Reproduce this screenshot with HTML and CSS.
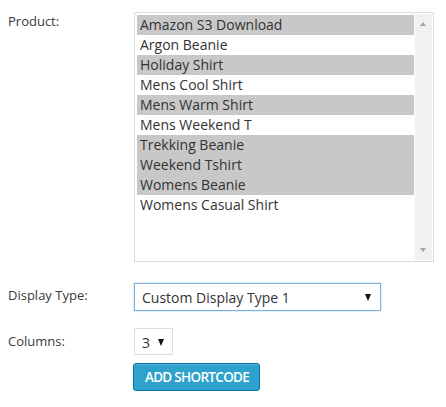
FILE: index.html
```html
<!DOCTYPE html>
<html>
<head>
<meta charset="utf-8">
<link rel="stylesheet" href="styles.css">
</head>
<body>
<div class="form">
  <div class="row row-product">
    <div class="label">Product:</div>
    <div class="listbox">
      <div class="items">
        <div class="item sel">Amazon S3 Download</div>
        <div class="item">Argon Beanie</div>
        <div class="item sel">Holiday Shirt</div>
        <div class="item">Mens Cool Shirt</div>
        <div class="item sel">Mens Warm Shirt</div>
        <div class="item">Mens Weekend T</div>
        <div class="item sel">Trekking Beanie</div>
        <div class="item sel">Weekend Tshirt</div>
        <div class="item sel">Womens Beanie</div>
        <div class="item">Womens Casual Shirt</div>
      </div>
      <div class="scrollbar">
        <span class="arrow up"></span>
        <span class="arrow down"></span>
      </div>
    </div>
  </div>
  <div class="row row-type">
    <div class="label">Display Type:</div>
    <div class="select select-type">
      <span>Custom Display Type 1</span>
      <span class="caret"></span>
    </div>
  </div>
  <div class="row row-cols">
    <div class="label">Columns:</div>
    <div class="control">
      <div class="select select-cols">
        <span>3</span>
        <span class="caret"></span>
      </div>
      <button class="btn">ADD SHORTCODE</button>
    </div>
  </div>
</div>
</body>
</html>
```

FILE: styles.css
```css
html, body {
  margin: 0;
  padding: 0;
  background: #ffffff;
}
body {
  font-family: "Open Sans", "Liberation Sans", sans-serif;
  color: #333333;
}
.form {
  padding: 12px 0 0 8px;
  display: flex;
  flex-direction: column;
}
.row {
  display: grid;
  grid-template-columns: 126px auto;
  align-items: start;
}
.label {
  font-size: 13px;
  line-height: 18px;
  color: #3a3a3a;
}
.listbox {
  width: 298px;
  height: 248px;
  border: 1px solid #dddddd;
  display: flex;
  justify-content: space-between;
  background: #fff;
}
.items {
  padding: 2px 0 0 2px;
  width: 277px;
}
.item {
  height: 20px;
  line-height: 20px;
  font-size: 14px;
  padding-left: 3px;
  color: #333;
  white-space: nowrap;
}
.item.sel {
  background: #c8c8c8;
}
.scrollbar {
  width: 17px;
  margin: 1px 1px 1px 0;
  background: #f1f1f1;
  position: relative;
}
.arrow {
  position: absolute;
  left: 5px;
  width: 0;
  height: 0;
  border-left: 3.5px solid transparent;
  border-right: 3.5px solid transparent;
}
.arrow.up {
  top: 8px;
  border-bottom: 4px solid #a3a3a3;
}
.arrow.down {
  bottom: 8px;
  border-top: 4px solid #a3a3a3;
}
.row-type {
  margin-top: 21px;
  align-items: center;
}
.row-type .label {
  padding-bottom: 4px;
}
.select {
  box-sizing: border-box;
  display: flex;
  align-items: center;
  justify-content: space-between;
  font-size: 14px;
  color: #333;
  background: #fff;
}
.select-type {
  width: 247px;
  height: 28px;
  border: 1px solid #7fadd8;
  box-shadow: 0 0 2px rgba(30, 140, 190, 0.35);
  padding: 0 9px 0 7px;
}
.caret {
  width: 0;
  height: 0;
  border-left: 3.5px solid transparent;
  border-right: 3.5px solid transparent;
  border-top: 7px solid #111;
}
.row-cols {
  margin-top: 17px;
}
.row-cols .label {
  padding-top: 4px;
}
.control {
  display: flex;
  flex-direction: column;
  align-items: flex-start;
  gap: 8px;
}
.select-cols {
  width: 39px;
  height: 27px;
  border: 1px solid #dddddd;
  padding: 2px 8px 0 7px;
}
.btn {
  margin-left: -1px;
  box-sizing: border-box;
  width: 127px;
  height: 28px;
  background: #2ea2cc;
  border: 1px solid #0074a2;
  border-radius: 3px;
  box-shadow: inset 0 1px 0 rgba(120, 200, 230, 0.5);
  color: #fff;
  font-family: "Open Sans", "Liberation Sans", sans-serif;
  font-size: 13.5px;
  font-weight: 600;
  letter-spacing: -0.7px;
  padding: 0 0 0 1px;
  line-height: 26px;
}
```
